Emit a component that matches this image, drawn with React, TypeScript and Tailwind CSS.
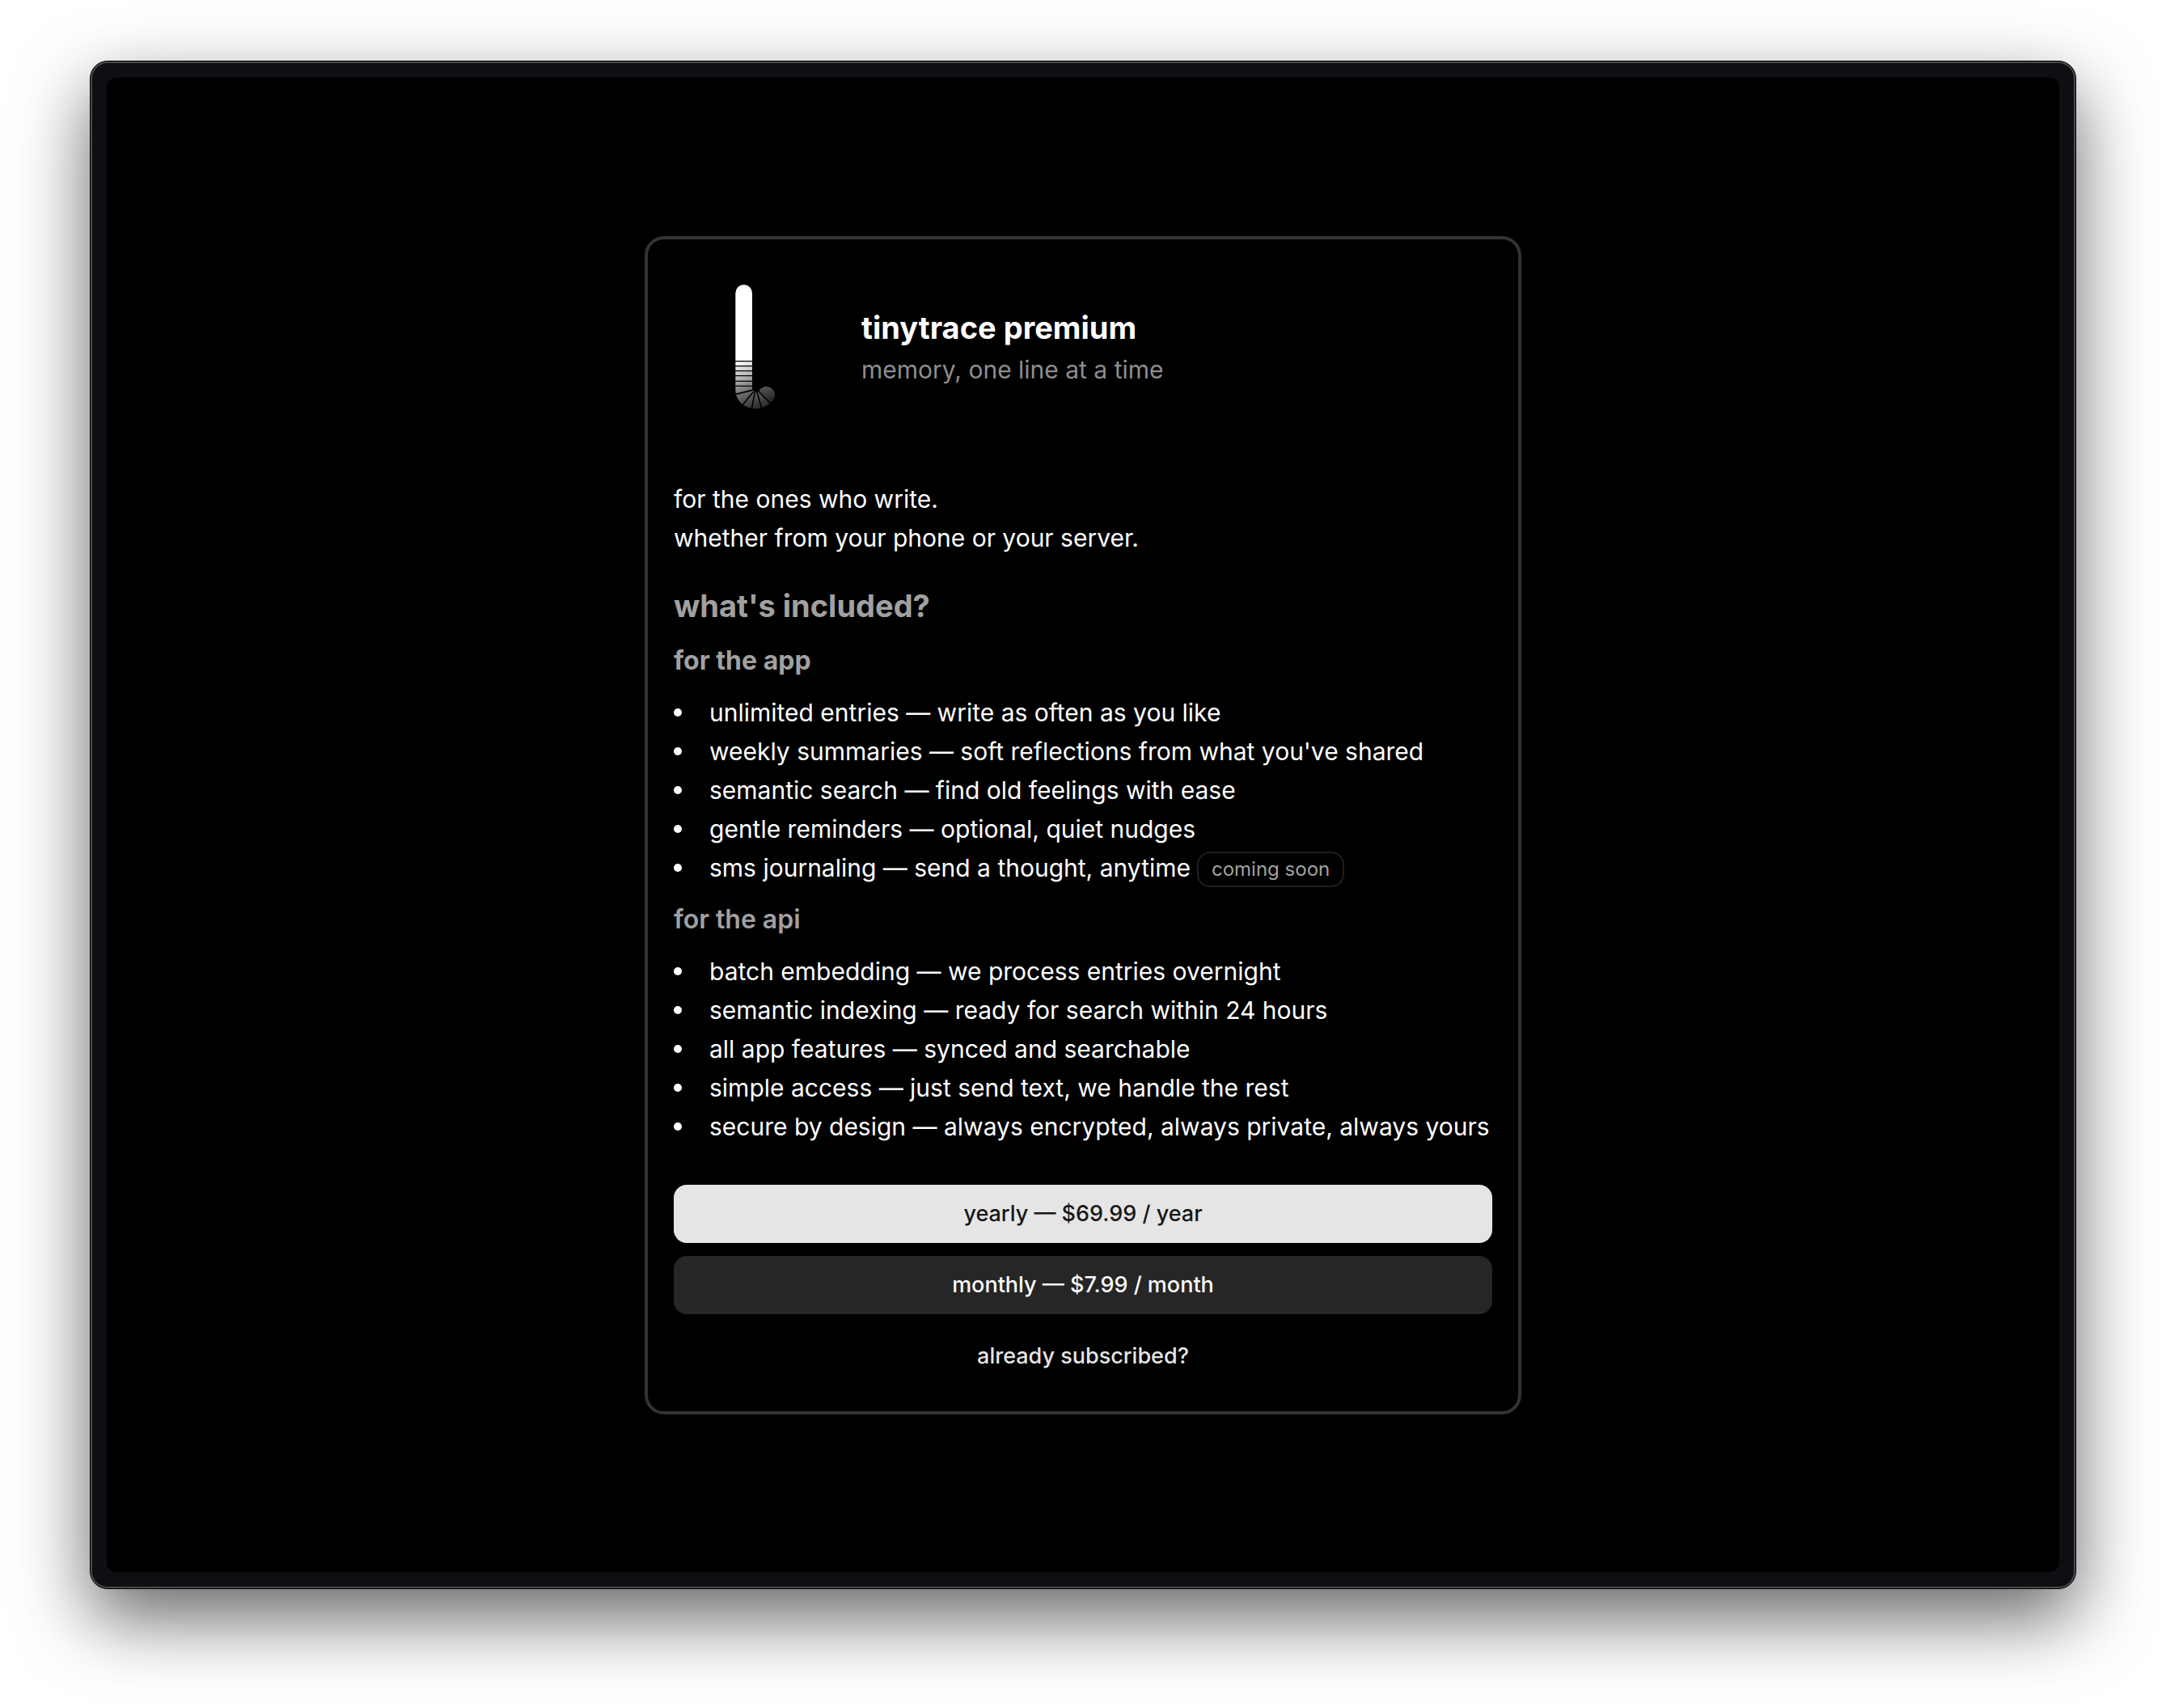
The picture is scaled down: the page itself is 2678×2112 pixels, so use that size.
import React from "react";

type Feature = { text: string; badge?: string };

const appFeatures: Feature[] = [
  { text: "unlimited entries — write as often as you like" },
  { text: "weekly summaries — soft reflections from what you've shared" },
  { text: "semantic search — find old feelings with ease" },
  { text: "gentle reminders — optional, quiet nudges" },
  { text: "sms journaling — send a thought, anytime", badge: "coming soon" },
];

const apiFeatures: Feature[] = [
  { text: "batch embedding — we process entries overnight" },
  { text: "semantic indexing — ready for search within 24 hours" },
  { text: "all app features — synced and searchable" },
  { text: "simple access — just send text, we handle the rest" },
  { text: "secure by design — always encrypted, always private, always yours" },
];

function FeatureList({ items }: { items: Feature[] }) {
  return (
    <ul className="my-4">
      {items.map((item) => (
        <li key={item.text} className="flex items-center">
          <span className="mr-[34px] size-[10px] shrink-0 rounded-full bg-white" />
          <span>{item.text}</span>
          {item.badge && (
            <span className="ml-2 flex h-11 items-center self-end rounded-2xl border-2 border-[#1f1f1f] px-4 text-2xl whitespace-nowrap text-[#a1a1a1]">
              {item.badge}
            </span>
          )}
        </li>
      ))}
    </ul>
  );
}

function Logo() {
  return (
    <svg viewBox="-81 24 600 600" className="size-[200px] shrink-0" aria-hidden="true">
      <defs>
        <linearGradient id="tail" gradientUnits="userSpaceOnUse" x1="165" y1="376" x2="235" y2="550">
          <stop offset="0" stopColor="#fff" />
          <stop offset="0.3" stopColor="#b8b8b8" />
          <stop offset="0.62" stopColor="#6c6c6c" />
          <stop offset="0.85" stopColor="#444" />
          <stop offset="1" stopColor="#2c2c2c" />
        </linearGradient>
        <linearGradient id="tip" gradientUnits="userSpaceOnUse" x1="250" y1="474" x2="272" y2="532">
          <stop offset="0" stopColor="#565656" />
          <stop offset="1" stopColor="#202020" />
        </linearGradient>
      </defs>
      <path d="M148 376V124a31 31 0 0 1 62 0V376Z" fill="#fff" />
      <path d="M148 376H210V483L222 493L236 490L276 532C262 546 240 553 222 553C180 553 148 522 148 484Z" fill="url(#tail)" />
      <path d="M235 489A31 31 0 1 1 277 530Z" fill="url(#tip)" />
      <path
        d="M146 377H212M146 395H212M146 413H212M146 431H212M146 451H212M146 469H212"
        stroke="#000"
        strokeWidth="4"
      />
      <path
        d="M150 499L212 484M176 537L215 490M208 556L220 491M246 556L228 491M278 534L234 489"
        stroke="#000"
        strokeWidth="5"
      />
    </svg>
  );
}

export default function App() {
  const button = "flex h-[72px] w-full cursor-pointer items-center justify-center rounded-2xl text-[27px] font-medium";
  return (
    <div className="flex min-h-screen bg-white px-[111px] pt-[75px] pb-[147px] font-['Inter',sans-serif]">
      <div className="flex flex-1 rounded-[22px] border border-black bg-[#0d0f13] shadow-[0_36px_90px_rgba(0,0,0,0.6)]">
        <div className="flex flex-1 rounded-[21px] border-2 border-[#47494c] p-[18px]">
          <main className="flex flex-1 items-center justify-center rounded-xl bg-black">
            <section className="w-full max-w-[1084px] rounded-3xl border-4 border-[#333] px-8 pt-[33px] pb-8 text-[30px] leading-[48px] text-white">
              <header className="mb-16 flex items-center gap-8">
                <Logo />
                <div>
                  <h1 className="text-[38px] leading-[56px] font-bold">tinytrace premium</h1>
                  <p className="text-[#8e8e8e]">memory, one line at a time</p>
                </div>
              </header>
              <p>
                for the ones who write.
                <br />
                whether from your phone or your server.
              </p>
              <h2 className="mt-8 mb-4 text-[38px] leading-[56px] font-bold text-[#a1a1a1]">what's included?</h2>
              <h3 className="text-[32px] leading-[48px] font-bold text-[#a1a1a1]">for the app</h3>
              <FeatureList items={appFeatures} />
              <h3 className="text-[32px] leading-[48px] font-semibold text-[#a1a1a1]">for the api</h3>
              <FeatureList items={apiFeatures} />
              <div className="mt-12 flex flex-col gap-4">
                <button type="button" className={`${button} bg-[#e5e5e5] text-[#171717]`}>yearly — $69.99 / year</button>
                <button type="button" className={`${button} bg-[#262626] text-[#fafafa]`}>monthly — $7.99 / month</button>
                <button type="button" className={`${button} text-[#e5e5e5]`}>already subscribed?</button>
              </div>
            </section>
          </main>
        </div>
      </div>
    </div>
  );
}
